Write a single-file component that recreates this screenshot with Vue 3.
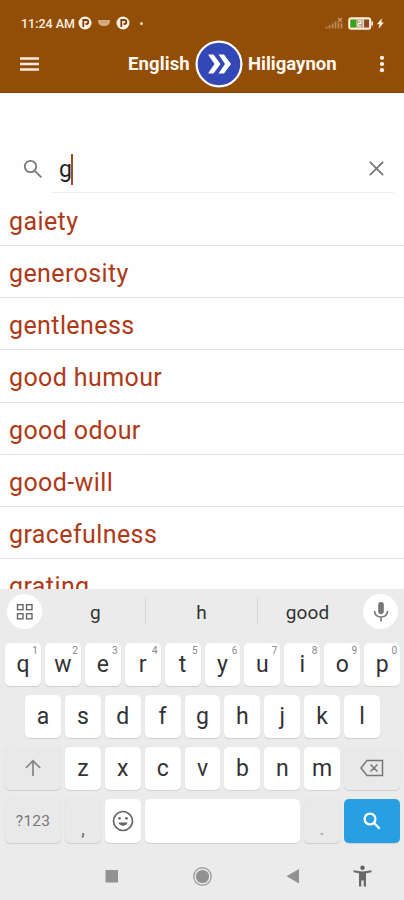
<script setup>
const words = ['gaiety', 'generosity', 'gentleness', 'good humour', 'good odour', 'good-will', 'gracefulness', 'grating']
const top = 'qwertyuiop'.split('')
const home = 'asdfghjkl'.split('')
const bottom = 'zxcvbnm'.split('')
</script>

<template>
  <div class="screen">
    <header class="header">
      <div class="status">
        <span class="time">11:24 AM</span>
        <svg class="pin" viewBox="0 0 14 14"><circle cx="7" cy="7" r="6.5" fill="#fff3e6" /><path d="M5.300 11V4h3a1.900 1.900 0 0 1 0 4H7.500" fill="none" stroke="#843b08" stroke-width="1.800" /></svg>
        <svg class="bowl" viewBox="0 0 12 8"><path d="M0 1h12c0 4-2 6-6 6S0 5 0 1z" fill="#d3ae82" /><path d="M2 2l4 1.500 4-1.500" fill="none" stroke="#c59668" stroke-width=".7" /></svg>
        <svg class="pin" viewBox="0 0 14 14"><circle cx="7" cy="7" r="6.5" fill="#fff3e6" /><path d="M5.300 11V4h3a1.900 1.900 0 0 1 0 4H7.500" fill="none" stroke="#843b08" stroke-width="1.800" /></svg>
        <span class="dot"></span>
        <span class="spacer"></span>
        <svg class="signal" viewBox="0 0 19 12"><path d="M1.500 11.500v-2M4.500 11.500v-3.500M7.500 11.500v-5M10.500 11.500v-7M13.500 11.500v-6M16.500 11.500v-5" stroke="#b88a58" stroke-width="1.800" /><path d="M13 1l4 4m0-4l-4 4" stroke="#c79d70" stroke-width="1.100" /></svg>
        <svg class="battery" viewBox="0 0 26 13"><rect x="1" y="1" width="21.500" height="11" rx="2.500" fill="#efe0c4" stroke="#fff0df" stroke-width="1.600" /><rect x="2.300" y="2.500" width="6" height="8" fill="#36a51b" /><rect x="8.300" y="2.500" width="6.500" height="8" fill="#b3a47d" /><path d="M10 4h3v2.500h-3V9h3" fill="none" stroke="#fff" /><rect x="16" y="2.500" width="5" height="8" fill="#8b4726" /><path d="M23.500 4.500h1.500v4h-1.500z" fill="#fff0df" /></svg>
        <svg class="bolt" viewBox="0 0 8 12"><path d="M5.500 0L0 6.900h3L1.800 12l6-7.200H5z" fill="#fff3e6" /></svg>
      </div>
      <div class="bar">
        <svg class="menu" viewBox="0 0 19 16"><path d="M0 2.500h19M0 8h19M0 13.500h19" stroke="#ffeadb" stroke-width="2.500" /></svg>
        <span class="lang from">English</span>
        <svg class="swap" viewBox="0 0 48 48"><circle cx="24" cy="24" r="22.400" fill="#3348b6" stroke="#fff" stroke-width="2.200" /><path d="M13 14.500h5.500l7 9.500-7 9.500H13l6.500-9.500zM23.500 14.500H29l7 9.500-7 9.500h-5.500L30 24z" fill="#fff" /></svg>
        <span class="lang">Hiligaynon</span>
        <span class="spacer"></span>
        <svg class="more" viewBox="0 0 6 18"><g fill="#fff7ee"><circle cx="3" cy="2.800" r="2.100" /><circle cx="3" cy="9" r="2.100" /><circle cx="3" cy="15.200" r="2.100" /></g></svg>
      </div>
    </header>

    <main class="content">
      <div class="search">
        <svg class="lens" viewBox="0 0 20 20"><circle cx="7.500" cy="7.500" r="5.700" /><path d="M11.800 11.800L18.300 18.300" /></svg>
        <div class="field"><span class="query">g</span><span class="caret"></span><span class="spacer"></span>
          <svg class="clear" viewBox="0 0 14 14"><path d="M.8.800l12.400 12.400M13.200.800L.8 13.200" /></svg>
        </div>
      </div>
      <ul class="list"><li v-for="w in words" :key="w">{{ w }}</li></ul>
    </main>

    <section class="keyboard">
      <div class="suggest">
        <span class="round"><svg width="18" height="18" viewBox="0 0 18 18" fill="none" stroke="#666" stroke-width="1.400"><rect x="1.500" y="1.700" width="5.500" height="5" /><rect x="10.500" y="1.700" width="5.500" height="5" /><rect x="1.500" y="10.800" width="5.500" height="5" /><rect x="10.500" y="10.800" width="5.500" height="5" /></svg></span>
        <span class="hint one">g</span><span class="hint two">h</span><span class="hint three">good</span>
        <span class="round"><svg width="18" height="22" viewBox="0 0 18 22"><rect x="6.200" y="1" width="5.600" height="12" rx="2.800" fill="#777" /><path d="M2.500 10c.3 4 3 6 6.500 6s6.200-2 6.500-6M9 16v4.500" fill="none" stroke="#777" stroke-width="1.700" /></svg></span>
      </div>
      <div class="row">
        <span v-for="(k, i) in top" :key="k" class="key">{{ k }}<sup>{{ (i + 1) % 10 }}</sup></span>
      </div>
      <div class="row home"><span v-for="k in home" :key="k" class="key">{{ k }}</span></div>
      <div class="row">
        <span class="key wide muted"><svg width="18" height="18" viewBox="0 0 18 18" fill="none" stroke="#858585" stroke-width="1.700"><path d="M9 17V2M1.800 9L9 1.800 16.200 9" /></svg></span>
        <span v-for="k in bottom" :key="k" class="key">{{ k }}</span>
        <span class="key wide muted"><svg width="24" height="18" viewBox="0 0 24 18" fill="none" stroke="#777" stroke-width="1.500"><path d="M7 1.500h15.500v15H7L1 9zM10.500 5.500l7 7m0-7l-7 7" /></svg></span>
      </div>
      <div class="row last">
        <span class="key wide muted mode">?123</span>
        <span class="key muted comma">,</span>
        <span class="key"><svg width="22" height="22" viewBox="0 0 22 22"><circle cx="11" cy="11" r="9.500" fill="none" stroke="#666" stroke-width="1.700" /><circle cx="7.500" cy="8.300" r="1.350" fill="#666" /><circle cx="14.500" cy="8.300" r="1.350" fill="#666" /><path d="M6.500 12.500h9c-1 4.200-8 4.200-9 0z" fill="#666" /></svg></span>
        <span class="key space"></span>
        <span class="key muted comma period">.</span>
        <span class="key wide go"><svg width="18" height="18" viewBox="0 0 18 18" fill="none" stroke="#fff" stroke-width="2.300"><circle cx="7" cy="7" r="5.400" /><path d="M11 11l5.700 5.700" /></svg></span>
      </div>
      <div class="nav">
        <svg viewBox="0 0 24 24"><path d="M5.500 6h12.500v12.500H5.500z" fill="#929292" /></svg>
        <svg viewBox="0 0 24 24"><circle cx="12.500" cy="12.500" r="8.700" fill="none" stroke="#a0a0a0" stroke-width="1.400" /><circle cx="12.500" cy="12.500" r="6.600" fill="#919191" /></svg>
        <svg viewBox="0 0 24 24"><path d="M19 5v14.500L6.500 12.200z" fill="#929292" /></svg>
        <svg viewBox="0 0 24 24"><circle cx="12.500" cy="3.700" r="2.200" fill="#606060" /><path d="M3.500 6.300c6 1.500 12 1.500 18 0v2c-2 .5-3.500.8-5.500 1V22.500h-2.300v-6h-2.400v6H9V9.300c-2-.2-3.500-.5-5.500-1z" fill="#686868" /></svg>
      </div>
    </section>
  </div>
</template>

<style>
body { margin: 0; overflow: hidden; }
</style>
<style scoped>
* { box-sizing: border-box; }
.screen { width: 404px; height: 900px; display: flex; flex-direction: column; overflow: hidden; background: #fefefe; font-family: Roboto, sans-serif; }
svg { display: block; flex: none; }
.spacer { flex: 1; }
.header { height: 93px; flex: none; background: #924d06; border-bottom: 1px solid #8a420a; }
.status { height: 38px; padding: 8px 20px 0 21px; display: flex; align-items: center; color: #fff0e2; }
.time { width: 57px; font-size: 12.500px; font-weight: 500; white-space: nowrap; }
.pin { width: 14px; height: 14px; }
.bowl { width: 12px; height: 8px; margin: 0 6px 0 6px; }
.dot { width: 3px; height: 3px; margin-left: 10px; background: #f4d8b5; border-radius: 50%; }
.signal { width: 19px; height: 12px; margin-right: 4px; }
.battery { width: 26px; height: 13px; margin-right: 3px; }
.bolt { width: 7px; height: 11px; }
.bar { height: 52px; padding: 0 19px 0 20px; display: flex; align-items: center; }
.menu { width: 19px; height: 16px; }
.lang { color: #fff9f2; font-size: 18.500px; font-weight: 700; line-height: 24px; white-space: nowrap; }
.from { width: 66px; margin-left: 89px; letter-spacing: .1px; }
.swap { width: 48px; height: 48px; margin: 0 5px 0 1px; }
.more { width: 6px; height: 18px; }
.content { height: 496px; flex: none; overflow: hidden; padding-top: 52px; }
.search { height: 48px; display: flex; padding: 0 10px 0 23px; align-items: center; }
.lens { width: 20px; height: 20px; fill: none; stroke: #777; stroke-width: 1.800; }
.field { display: flex; align-items: center; flex: 1; height: 48px; margin-left: 8px; padding: 0 10px 0 8px; border-bottom: 1px solid #eee; }
.query { width: 12px; font-size: 23px; color: #222; padding-top: 2px; }
.caret { width: 2px; height: 31px; background: #a34b20; margin-top: 1px; }
.clear { width: 15px; height: 15px; fill: none; stroke: #777; stroke-width: 1.600; }
.list { margin: 0; padding: 1px 0 0; list-style: none; }
.list li { height: 52.150px; padding: 4px 9px 0; border-bottom: 1px solid #e4e4e4; color: #ae3917; font-size: 25px; line-height: 48px; letter-spacing: .4px; }
.keyboard { flex: 1; background: #ebebeb; display: flex; flex-direction: column; }
.suggest { height: 54px; display: flex; align-items: flex-start; padding: 5px 6px 0 7px; }
.round { width: 35px; height: 35px; border-radius: 50%; background: #fff; display: flex; align-items: center; justify-content: center; flex: none; }
.hint { height: 27px; margin-top: 4px; color: #333; font-size: 19px; line-height: 29px; letter-spacing: .1px; text-align: center; }
.one { width: 104px; padding-left: 4px; border-right: 1px solid #d7d7d7; }
.two { width: 112px; border-right: 1px solid #d7d7d7; }
.three { width: 105px; padding-right: 6px; }
.row { height: 52px; padding: 0 4px 0 5px; display: flex; gap: 4px; flex: none; }
.home { padding: 0 24px 0 25px; }
.key { position: relative; flex: 1; height: 43px; display: flex; align-items: center; justify-content: center; padding-bottom: 1px; border-radius: 5px; background: #fff; box-shadow: 0 1px 1px #cfcfcf; color: #333; font-size: 23px; }
.key sup { position: absolute; top: 3px; right: 3px; color: #888; font-size: 10px; line-height: 10px; }
.wide { flex: 0 0 56px; }
.muted { background: #e9e9e9; box-shadow: 0 1px 1px #cdcdcd, 0 0 1px #d5d5d5; }
.mode { color: #777; font-size: 15.500px; letter-spacing: .2px; }
.comma { color: #777; font-size: 20px; padding: 14px 0 0; }
.period { color: #aaa; }
.space { flex: 0 0 155px; }
.go { background: #289fe2; }
.last .key { height: 44px; }
.nav { display: flex; flex: 1; padding: 13px 30px 0 100px; gap: 66px; }
.nav svg { width: 24px; height: 24px; }
.nav svg:last-child { margin-left: -20px; }
</style>
